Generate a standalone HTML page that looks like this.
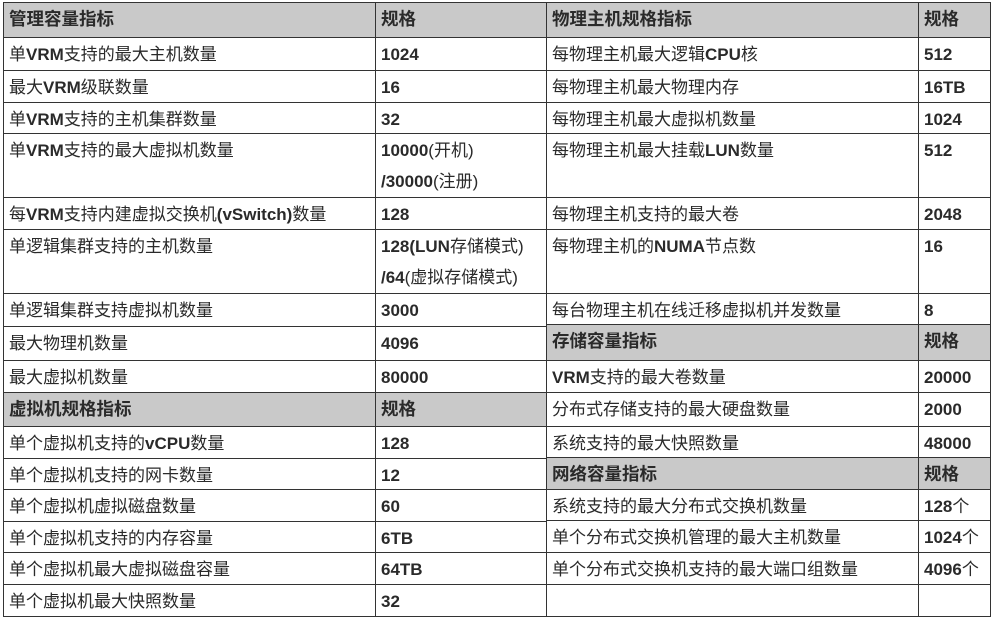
<!DOCTYPE html>
<html><head><meta charset="utf-8"><style>
body{margin:0;width:993px;height:618px;background:#fff;overflow:hidden;position:relative;font-family:"Liberation Sans","Noto Sans CJK SC",sans-serif;font-size:17px;color:#2a2a2a}
.c{position:absolute;box-sizing:border-box;border:1px solid #333;padding:1px 0 0 5px;line-height:31px;white-space:nowrap;overflow:hidden}
.h{background:#c9c9c9;font-weight:bold;font-size:17.5px}
b{font-weight:bold}
</style></head><body>
<div id="t"></div>
<script>
const L=[[2,37,"管理容量指标","规格",1],[37,70,"单<b>VRM</b>支持的最大主机数量","<b>1024</b>"],[70,102,"最大<b>VRM</b>级联数量","<b>16</b>"],[102,133,"单<b>VRM</b>支持的主机集群数量","<b>32</b>"],[133,197,"单<b>VRM</b>支持的最大虚拟机数量","<b>10000</b>(开机)<br><b>/30000</b>(注册)"],[197,229,"每<b>VRM</b>支持内建虚拟交换机<b>(vSwitch)</b>数量","<b>128</b>"],[229,293,"单逻辑集群支持的主机数量","<b>128(LUN</b>存储模式)<br><b>/64</b>(虚拟存储模式)"],[293,326,"单逻辑集群支持虚拟机数量","<b>3000</b>"],[326,360,"最大物理机数量","<b>4096</b>"],[360,392,"最大虚拟机数量","<b>80000</b>"],[392,426,"虚拟机规格指标","规格",1],[426,458,"单个虚拟机支持的<b>vCPU</b>数量","<b>128</b>"],[458,489,"单个虚拟机支持的网卡数量","<b>12</b>"],[489,521,"单个虚拟机虚拟磁盘数量","<b>60</b>"],[521,552,"单个虚拟机支持的内存容量","<b>6TB</b>"],[552,584,"单个虚拟机最大虚拟磁盘容量","<b>64TB</b>"],[584,616,"单个虚拟机最大快照数量","<b>32</b>"]];
const R=[[2,37,"物理主机规格指标","规格",1],[37,70,"每物理主机最大逻辑<b>CPU</b>核","<b>512</b>"],[70,102,"每物理主机最大物理内存","<b>16TB</b>"],[102,133,"每物理主机最大虚拟机数量","<b>1024</b>"],[133,197,"每物理主机最大挂载<b>LUN</b>数量","<b>512</b>"],[197,229,"每物理主机支持的最大卷","<b>2048</b>"],[229,293,"每物理主机的<b>NUMA</b>节点数","<b>16</b>"],[293,324,"每台物理主机在线迁移虚拟机并发数量","<b>8</b>"],[324,360,"存储容量指标","规格",1],[360,392,"<b>VRM</b>支持的最大卷数量","<b>20000</b>"],[392,426,"分布式存储支持的最大硬盘数量","<b>2000</b>"],[426,457,"系统支持的最大快照数量","<b>48000</b>"],[457,489,"网络容量指标","规格",1],[489,520,"系统支持的最大分布式交换机数量","<b>128</b>个"],[520,552,"单个分布式交换机管理的最大主机数量","<b>1024</b>个"],[552,584,"单个分布式交换机支持的最大端口组数量","<b>4096</b>个"],[584,616,"",""]];
let h="";
function add(rows,x1,x2,x3){for(const r of rows){const cls="c"+(r[4]?" h":"");const t=r[0],ht=r[1]-r[0]+1;
h+=`<div class="${cls}" style="left:${x1}px;top:${t}px;width:${x2-x1+1}px;height:${ht}px">${r[2]}</div>`;
h+=`<div class="${cls}" style="left:${x2}px;top:${t}px;width:${x3-x2+1}px;height:${ht}px">${r[3]}</div>`;}}
add(L,3,375,546);add(R,546,918,990);
document.getElementById("t").innerHTML=h;
</script>
</body></html>
